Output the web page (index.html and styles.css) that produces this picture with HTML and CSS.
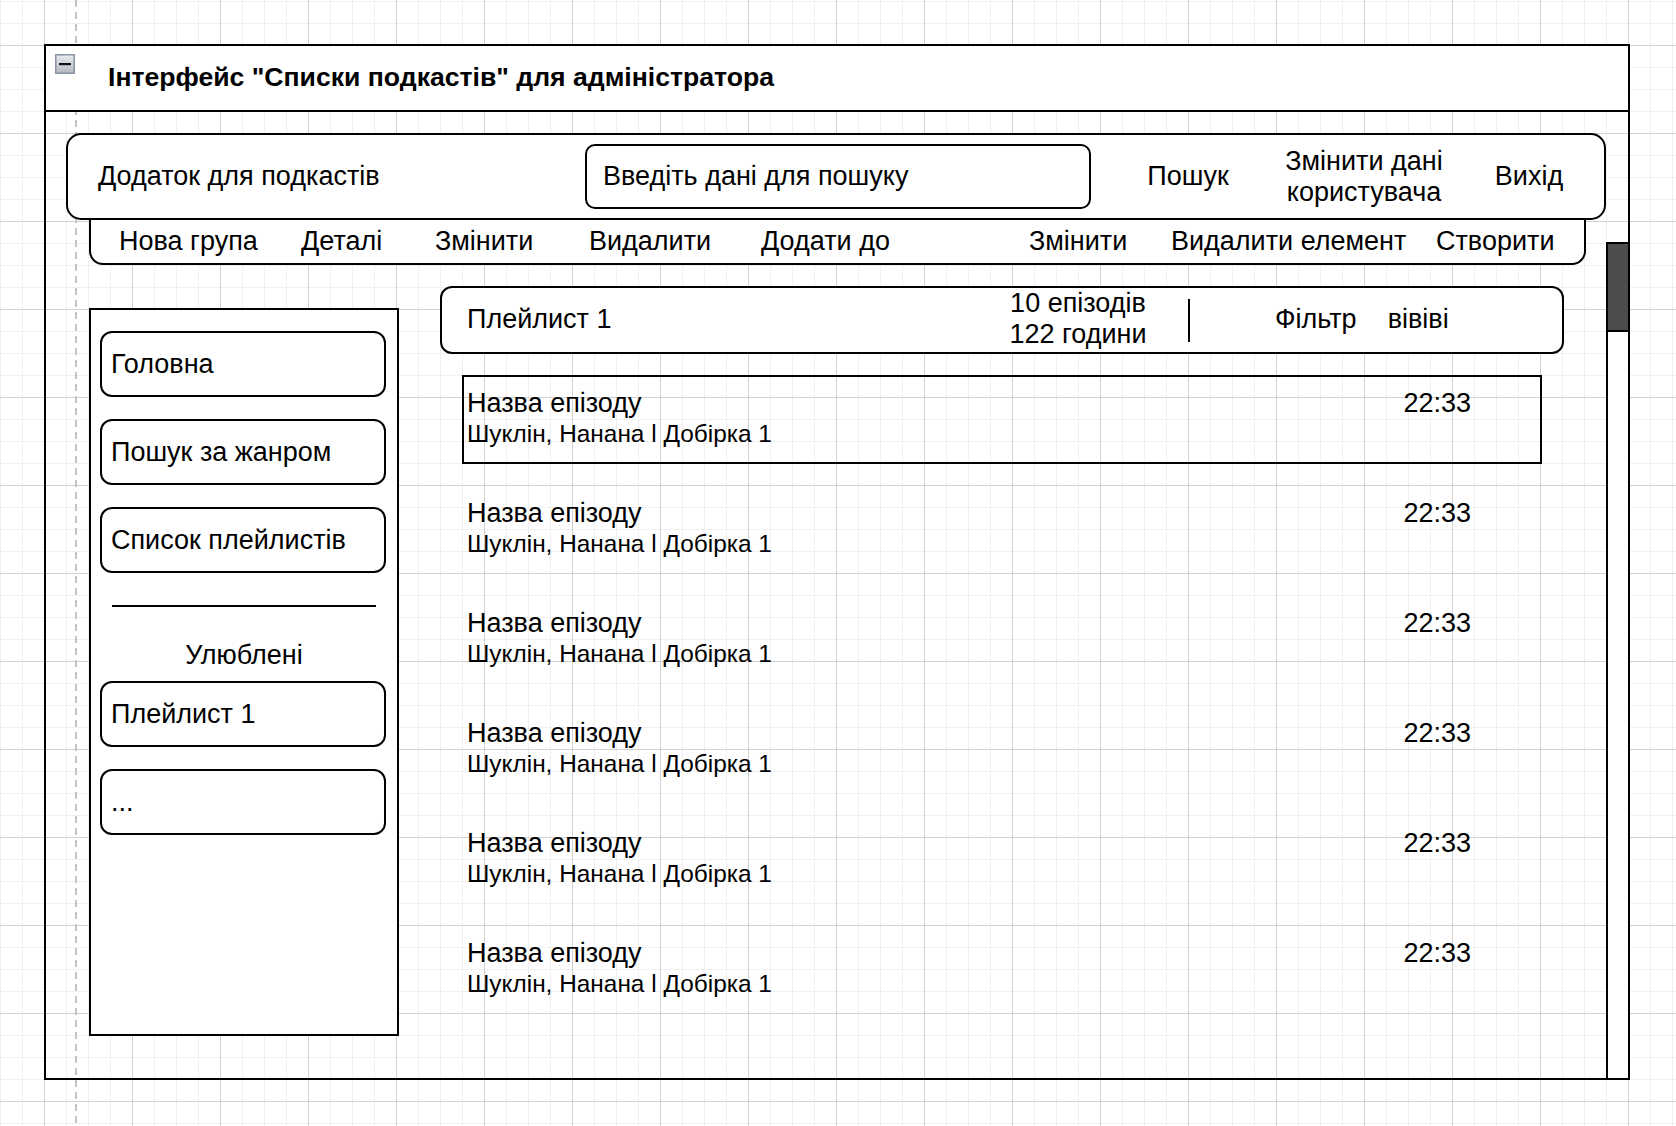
FILE: index.html
```html
<!DOCTYPE html>
<html lang="uk">
<head>
<meta charset="utf-8">
<title>Інтерфейс "Списки подкастів" для адміністратора</title>
<link rel="stylesheet" href="styles.css">
</head>
<body>
<div class="frame">
  <div class="frame-header">
    <span class="collapse-icon">
      <svg width="20" height="20" viewBox="0 0 20 20">
        <defs>
          <linearGradient id="g" x1="0" y1="0" x2="0" y2="1">
            <stop offset="0" stop-color="#e9ebef"/>
            <stop offset="1" stop-color="#b4b8c0"/>
          </linearGradient>
        </defs>
        <rect x="0.75" y="0.75" width="18.5" height="18.5" fill="url(#g)" stroke="#8a92a6" stroke-width="1.5"/>
        <rect x="4" y="9" width="12" height="2.2" fill="#111"/>
      </svg>
    </span>
    <span class="frame-title">Інтерфейс "Списки подкастів" для адміністратора</span>
  </div>
  <div class="frame-body">
    <div class="main-col">
      <div class="topbar">
        <div class="brand">Додаток для подкастів</div>
        <div class="search">Введіть дані для пошуку</div>
        <div class="top-link link-search">Пошук</div>
        <div class="top-link link-user">Змінити дані<br>користувача</div>
        <div class="top-link link-exit">Вихід</div>
      </div>
      <div class="toolbar">
        <span>Нова група</span>
        <span>Деталі</span>
        <span>Змінити</span>
        <span>Видалити</span>
        <span>Додати до</span>
        <span>Змінити</span>
        <span>Видалити елемент</span>
        <span>Створити</span>
      </div>
      <div class="workspace">
        <aside class="sidebar">
          <div class="side-btn">Головна</div>
          <div class="side-btn">Пошук за жанром</div>
          <div class="side-btn">Список плейлистів</div>
          <div class="side-sep"></div>
          <div class="side-label">Улюблені</div>
          <div class="side-btn">Плейлист 1</div>
          <div class="side-btn">...</div>
        </aside>
        <section class="content">
          <div class="playlist-head">
            <div class="pl-title">Плейлист 1</div>
            <div class="pl-stats">10 епізодів<br>122 години</div>
            <div class="pl-sep"></div>
            <div class="pl-filter">Фільтр</div>
            <div class="pl-extra">вівіві</div>
          </div>
          <div class="episode selected">
            <div class="ep-text"><div class="ep-name">Назва епізоду</div><div class="ep-meta">Шуклін, Нанана l Добірка 1</div></div>
            <div class="ep-time">22:33</div>
          </div>
          <div class="episode">
            <div class="ep-text"><div class="ep-name">Назва епізоду</div><div class="ep-meta">Шуклін, Нанана l Добірка 1</div></div>
            <div class="ep-time">22:33</div>
          </div>
          <div class="episode">
            <div class="ep-text"><div class="ep-name">Назва епізоду</div><div class="ep-meta">Шуклін, Нанана l Добірка 1</div></div>
            <div class="ep-time">22:33</div>
          </div>
          <div class="episode">
            <div class="ep-text"><div class="ep-name">Назва епізоду</div><div class="ep-meta">Шуклін, Нанана l Добірка 1</div></div>
            <div class="ep-time">22:33</div>
          </div>
          <div class="episode">
            <div class="ep-text"><div class="ep-name">Назва епізоду</div><div class="ep-meta">Шуклін, Нанана l Добірка 1</div></div>
            <div class="ep-time">22:33</div>
          </div>
          <div class="episode">
            <div class="ep-text"><div class="ep-name">Назва епізоду</div><div class="ep-meta">Шуклін, Нанана l Добірка 1</div></div>
            <div class="ep-time">22:33</div>
          </div>
        </section>
      </div>
    </div>
    <div class="scroll-col">
      <div class="scroll-track"><div class="scroll-thumb"></div></div>
    </div>
  </div>
</div>
</body>
</html>
```
FILE: styles.css
```css
html, body {
  margin: 0;
  padding: 0;
}
body {
  width: 1676px;
  height: 1126px;
  overflow: hidden;
  font-family: "Liberation Sans", Arial, Helvetica, sans-serif;
  color: #000;
  background-color: #fff;
  background-image:
    linear-gradient(to bottom, #c4c4c4 7px, transparent 7px),
    linear-gradient(to right, #d2d2d2 1px, transparent 1px),
    linear-gradient(to bottom, #d2d2d2 1px, transparent 1px),
    linear-gradient(to right, #f0f0f0 1px, transparent 1px),
    linear-gradient(to bottom, #f0f0f0 1px, transparent 1px);
  background-size: 2px 12px, 88px 88px, 88px 88px, 22px 22px, 22px 22px;
  background-position: 75px 0, 44px 45px, 44px 45px, 0 1px, 0 1px;
  background-repeat: repeat-y, repeat, repeat, repeat, repeat;
}

.frame {
  box-sizing: border-box;
  margin: 44px 0 0 44px;
  width: 1586px;
  height: 1036px;
  border: 2px solid #000;
  display: flex;
  flex-direction: column;
}

.frame-header {
  box-sizing: border-box;
  height: 66px;
  flex: none;
  background: #fff;
  border-bottom: 2px solid #000;
  display: flex;
  align-items: center;
  position: relative;
}
.collapse-icon {
  position: absolute;
  left: 9px;
  top: 8px;
  width: 20px;
  height: 20px;
  display: block;
}
.collapse-icon svg { display: block; }
.frame-title {
  margin-left: 62px;
  margin-top: -2px;
  font-weight: bold;
  font-size: 26.6px;
}

.frame-body {
  flex: 1;
  display: flex;
  min-height: 0;
}
.main-col {
  flex: 1;
  padding-left: 20px;
  display: flex;
  flex-direction: column;
}

.topbar {
  box-sizing: border-box;
  margin-top: 21px;
  height: 87px;
  border: 2px solid #000;
  border-radius: 15px;
  background: #fff;
  display: flex;
  align-items: center;
  font-size: 27px;
  position: relative;
  z-index: 2;
}
.brand {
  box-sizing: border-box;
  width: 517px;
  padding-left: 30px;
}
.search {
  box-sizing: border-box;
  width: 506px;
  height: 65px;
  border: 2px solid #000;
  border-radius: 10px;
  padding-left: 16px;
  display: flex;
  align-items: center;
}
.top-link {
  text-align: center;
  line-height: 31px;
}
.link-search { width: 160px; margin-left: 17px; }
.link-user { width: 192px; }
.link-exit { width: 138px; }

.toolbar {
  box-sizing: border-box;
  margin-left: 23px;
  width: 1497px;
  height: 45px;
  border: 2px solid #000;
  border-top: none;
  border-radius: 0 0 14px 14px;
  background: #fff;
  padding-left: 28px;
  display: grid;
  grid-template-columns: 182px 134px 154px 172px 268px 142px 265px auto;
  align-items: center;
  font-size: 27px;
  white-space: nowrap;
}

.workspace {
  display: flex;
  align-items: flex-start;
  margin-left: 23px;
}

.sidebar {
  box-sizing: border-box;
  margin-top: 43px;
  width: 310px;
  height: 728px;
  border: 2px solid #000;
  background: #fff;
  padding: 21px 11px 0 9px;
  font-size: 27px;
}
.side-btn {
  box-sizing: border-box;
  height: 66px;
  border: 2px solid #000;
  border-radius: 12px;
  padding-left: 9px;
  display: flex;
  align-items: center;
  margin-bottom: 22px;
}
.side-sep {
  height: 2px;
  background: #000;
  margin: 32px 10px 0 12px;
}
.side-label {
  text-align: center;
  line-height: 30px;
  margin: 33px 0 11px;
  padding-left: 2px;
}

.content {
  box-sizing: border-box;
  margin-left: 41px;
  margin-top: 21px;
  width: 1124px;
}
.playlist-head {
  box-sizing: border-box;
  height: 68px;
  border: 2px solid #000;
  border-radius: 12px;
  background: #fff;
  display: flex;
  align-items: center;
  font-size: 27px;
}
.pl-title {
  box-sizing: border-box;
  width: 558px;
  padding-left: 25px;
  margin-top: -2px;
}
.pl-stats {
  width: 156px;
  text-align: center;
  line-height: 31px;
  margin-top: -2px;
}
.pl-sep {
  width: 2px;
  height: 43px;
  background: #000;
  margin-left: 32px;
}
.pl-filter { margin-left: 85px; margin-top: -2px; }
.pl-extra { margin-left: 31px; margin-top: -2px; }

.episode {
  box-sizing: border-box;
  margin: 21px 0 0 22px;
  width: 1080px;
  height: 89px;
  border: 2px solid transparent;
  padding: 11px 69px 0 3px;
  display: flex;
  justify-content: space-between;
  align-items: flex-start;
}
.episode.selected {
  border-color: #000;
}
.ep-name {
  font-size: 27px;
  line-height: 31px;
}
.ep-meta {
  font-size: 24.4px;
  line-height: 30px;
}
.ep-time {
  font-size: 27px;
  line-height: 31px;
}

.scroll-col {
  width: 22px;
  flex: none;
  padding-top: 130px;
  display: flex;
  flex-direction: column;
}
.scroll-track {
  flex: 1;
  background: #fff;
  border-left: 2px solid #000;
}
.scroll-thumb {
  box-sizing: border-box;
  height: 90px;
  background: #4d4d4d;
  border-top: 2px solid #000;
  border-bottom: 2px solid #000;
}
```
